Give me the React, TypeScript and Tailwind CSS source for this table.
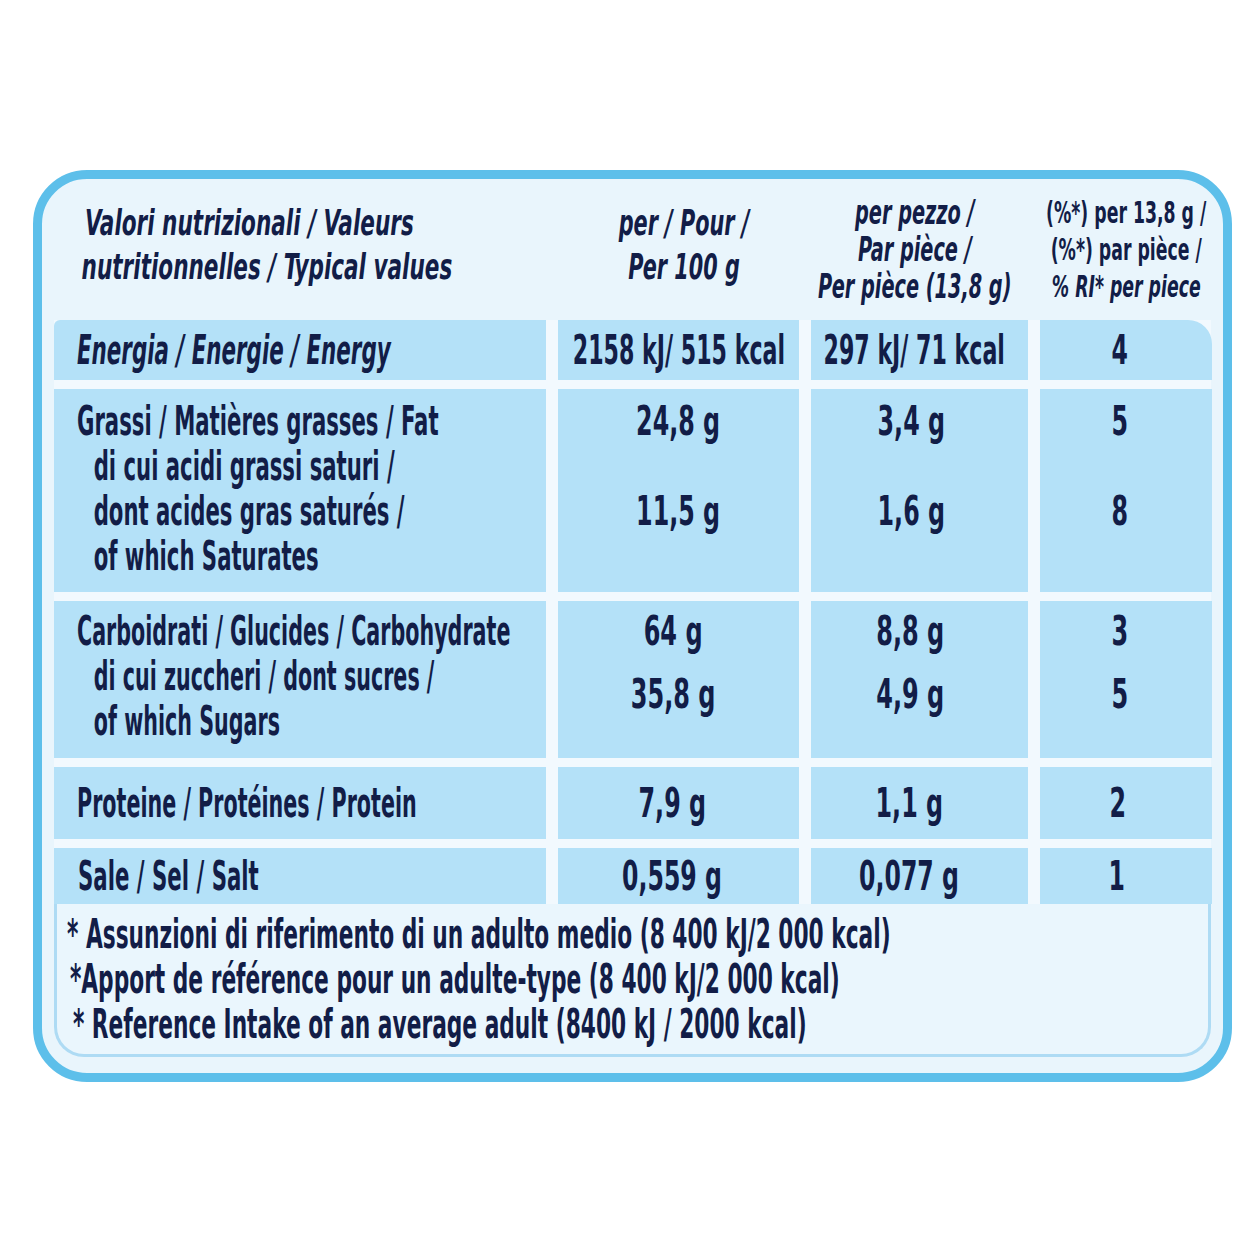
import React from 'react'

const Cell = ({ className = '', children }: { className?: string; children?: React.ReactNode }) => (
  <div className={'bg-[#b4e1f8] ' + className}>{children}</div>
)

export default function App() {
  return (
    <div className="w-[1254px] h-[1254px] bg-white pt-[170px] pl-[33px] font-['DejaVu_Sans_Condensed','DejaVu_Sans',sans-serif] font-bold text-[#121d47]">
      <div className="w-[1199px] h-[912px] rounded-[54px] border-[9px] border-[#5dbfea] bg-[#e9f5fc] px-[12px]">
        {/* Header */}
        <div className="grid grid-cols-[492px_241px_217px_172px] gap-x-[12px] h-[141px] items-center">
          <div className="pl-[31px] pb-[10px] italic text-[35px] leading-[44px] whitespace-nowrap">
            <div className="origin-left scale-x-[0.685]">
              <div>Valori nutrizionali / Valeurs</div>
              <div className="-ml-[5px]">nutritionnelles / Typical values</div>
            </div>
          </div>
          <div className="flex justify-center pl-[10px] pb-[10px] italic text-[35px] leading-[44px] text-center whitespace-nowrap">
            <div className="origin-center scale-x-[0.66]">
              <div>per / Pour /</div>
              <div>Per 100 g</div>
            </div>
          </div>
          <div className="flex justify-center pr-[10px] italic text-[33px] leading-[37px] text-center whitespace-nowrap">
            <div className="origin-center scale-x-[0.65]">
              <div>per pezzo /</div>
              <div>Par pièce /</div>
              <div>Per pièce (13,8 g)</div>
            </div>
          </div>
          <div className="flex justify-center text-[31px] leading-[37px] text-center whitespace-nowrap">
            <div className="origin-center scale-x-[0.62]">
              <div>(%*) per 13,8 g /</div>
              <div>(%*) par pièce /</div>
              <div className="italic">% RI* per piece</div>
            </div>
          </div>
        </div>

        {/* Table */}
        <div className="flex flex-col gap-y-[9px] bg-[#f2f9fe] text-[41px] leading-[45px] whitespace-nowrap">
          {/* Energy */}
          <div className="grid grid-cols-[492px_241px_217px_172px] gap-x-[12px] h-[60px]">
            <Cell className="flex items-center pl-[23px] rounded-tl-[6px]">
              <div className="origin-left scale-x-[0.58] italic">Energia / Energie / Energy</div>
            </Cell>
            <Cell className="flex items-center justify-center">
              <div className="origin-center scale-x-[0.6]">2158 kJ/ 515 kcal</div>
            </Cell>
            <Cell className="flex items-center justify-center pr-[10px]">
              <div className="origin-center scale-x-[0.6]">297 kJ/ 71 kcal</div>
            </Cell>
            <Cell className="flex items-center justify-center pr-[12px] rounded-tr-[24px]">
              <div className="origin-center scale-x-[0.64]">4</div>
            </Cell>
          </div>

          {/* Fat */}
          <div className="grid grid-cols-[492px_241px_217px_172px] gap-x-[12px] h-[203px]">
            <Cell className="pt-[10px] pl-[23px]">
              <div className="origin-left scale-x-[0.575]">
                <div>Grassi / Matières grasses / Fat</div>
                <div className="pl-[29px]">di cui acidi grassi saturi /</div>
                <div className="pl-[29px]">dont acides gras saturés /</div>
                <div className="pl-[29px]">of which Saturates</div>
              </div>
            </Cell>
            <Cell className="pt-[10px] flex justify-center">
              <div className="origin-center scale-x-[0.645] text-center">
                <div>24,8 g</div>
                <div>&nbsp;</div>
                <div>11,5 g</div>
              </div>
            </Cell>
            <Cell className="pt-[10px] pr-[16px] flex justify-center">
              <div className="origin-center scale-x-[0.645] text-center">
                <div>3,4 g</div>
                <div>&nbsp;</div>
                <div>1,6 g</div>
              </div>
            </Cell>
            <Cell className="pt-[10px] pr-[12px] flex justify-center">
              <div className="origin-center scale-x-[0.645] text-center">
                <div>5</div>
                <div>&nbsp;</div>
                <div>8</div>
              </div>
            </Cell>
          </div>

          {/* Carbohydrate */}
          <div className="grid grid-cols-[492px_241px_217px_172px] gap-x-[12px] h-[157px]">
            <Cell className="pt-[8px] pl-[23px]">
              <div className="origin-left scale-x-[0.56]">
                <div>Carboidrati / Glucides / Carbohydrate</div>
                <div className="pl-[30px]">di cui zuccheri / dont sucres /</div>
                <div className="pl-[30px]">of which Sugars</div>
              </div>
            </Cell>
            <Cell className="pt-[8px] pr-[10px] flex justify-center">
              <div className="origin-center scale-x-[0.65] text-center">
                <div>64 g</div>
                <div className="mt-[18px]">35,8 g</div>
              </div>
            </Cell>
            <Cell className="pt-[8px] pr-[18px] flex justify-center">
              <div className="origin-center scale-x-[0.65] text-center">
                <div>8,8 g</div>
                <div className="mt-[18px]">4,9 g</div>
              </div>
            </Cell>
            <Cell className="pt-[8px] pr-[12px] flex justify-center">
              <div className="origin-center scale-x-[0.65] text-center">
                <div>3</div>
                <div className="mt-[18px]">5</div>
              </div>
            </Cell>
          </div>

          {/* Protein */}
          <div className="grid grid-cols-[492px_241px_217px_172px] gap-x-[12px] h-[72px]">
            <Cell className="flex items-center pl-[23px]">
              <div className="origin-left scale-x-[0.56]">Proteine / Protéines / Protein</div>
            </Cell>
            <Cell className="flex items-center justify-center pr-[12px]">
              <div className="origin-center scale-x-[0.645]">7,9 g</div>
            </Cell>
            <Cell className="flex items-center justify-center pr-[20px]">
              <div className="origin-center scale-x-[0.645]">1,1 g</div>
            </Cell>
            <Cell className="flex items-center justify-center pr-[16px]">
              <div className="origin-center scale-x-[0.645]">2</div>
            </Cell>
          </div>

          {/* Salt */}
          <div className="grid grid-cols-[492px_241px_217px_172px] gap-x-[12px] h-[56px]">
            <Cell className="flex items-center pl-[24px]">
              <div className="origin-left scale-x-[0.577]">Sale / Sel / Salt</div>
            </Cell>
            <Cell className="flex items-center justify-center pr-[14px]">
              <div className="origin-center scale-x-[0.64]">0,559 g</div>
            </Cell>
            <Cell className="flex items-center justify-center pr-[22px]">
              <div className="origin-center scale-x-[0.64]">0,077 g</div>
            </Cell>
            <Cell className="flex items-center justify-center pr-[18px]">
              <div className="origin-center scale-x-[0.64]">1</div>
            </Cell>
          </div>
        </div>

        {/* Footnote */}
        <div className="h-[153px] border-x-[3px] border-b-[3px] border-[#aedbf4] rounded-b-[30px] bg-[#eaf6fd] pt-[8px] pl-[10px] text-[41px] leading-[45px] whitespace-nowrap">
          <div className="origin-left scale-x-[0.589]">
            <div>* Assunzioni di riferimento di un adulto medio (8 400 kJ/2 000 kcal)</div>
            <div className="pl-[5px]">*Apport de référence pour un adulte-type (8 400 kJ/2 000 kcal)</div>
            <div className="pl-[10px]">* Reference Intake of an average adult (8400 kJ / 2000 kcal)</div>
          </div>
        </div>
      </div>
    </div>
  )
}
